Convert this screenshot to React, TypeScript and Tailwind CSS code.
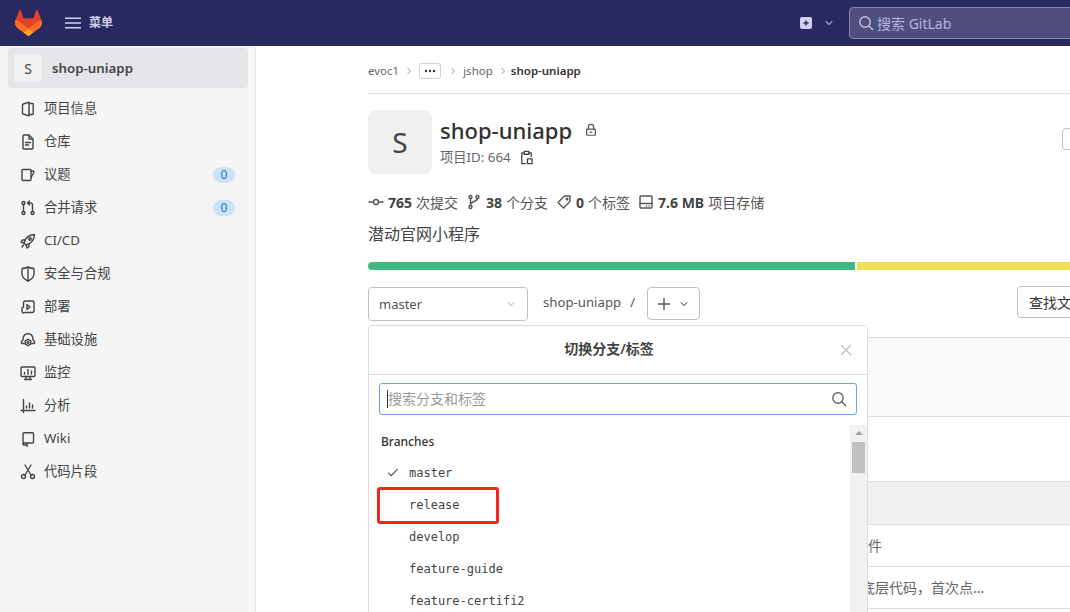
import React from "react";

const FONT = { fontFamily: '"Noto Sans","Noto Sans CJK SC",sans-serif' };

const S = ({ children, size = 16, cls = "" }: { children: React.ReactNode; size?: number; cls?: string }) => (
  <svg width={size} height={size} viewBox="0 0 16 16" fill="none" stroke="currentColor" strokeWidth={1.4} strokeLinecap="round" strokeLinejoin="round" className={`shrink-0 ${cls}`}>
    {children}
  </svg>
);

const Tanuki = () => (
  <svg width="27" height="26" viewBox="0 0 25 24" className="shrink-0">
    <path d="m24.507 9.5-.034-.09L21.082.562a.896.896 0 0 0-1.694.091l-2.29 7.01H7.825L5.535.653a.898.898 0 0 0-1.694-.09L.451 9.411.416 9.5a6.297 6.297 0 0 0 2.09 7.278l.012.01.03.022 5.16 3.867 2.56 1.935 1.554 1.176a1.051 1.051 0 0 0 1.268 0l1.555-1.176 2.56-1.935 5.197-3.89.014-.01A6.297 6.297 0 0 0 24.507 9.5Z" fill="#E24329" />
    <path d="m24.507 9.5-.034-.09a11.44 11.44 0 0 0-4.56 2.051l-7.447 5.632 4.742 3.584 5.197-3.89.014-.01A6.297 6.297 0 0 0 24.507 9.5Z" fill="#FC6D26" />
    <path d="m7.707 20.677 2.56 1.935 1.555 1.176a1.051 1.051 0 0 0 1.268 0l1.555-1.176 2.56-1.935-4.743-3.584-4.755 3.584Z" fill="#FCA326" />
    <path d="M5.01 11.461a11.43 11.43 0 0 0-4.56-2.05L.416 9.5a6.297 6.297 0 0 0 2.09 7.278l.012.01.03.022 5.16 3.867 4.745-3.584-7.444-5.632Z" fill="#FC6D26" />
  </svg>
);

const icons: Record<string, React.ReactNode> = {
  info: <><path d="M9 1.200 3.200 3c-.5.200-.7.500-.7 1v8c0 .5.200.8.700 1L9 14.800Z" /><path d="M9 2.500h3.500c.4 0 .7.300.7.700v9.600c0 .4-.3.700-.7.700H9" /></>,
  repo: <><path d="M3 2c0-.6.400-1 1-1h5l4 4v9c0 .6-.4 1-1 1H4c-.6 0-1-.4-1-1Z" /><path d="M9 1.500V5h3.500" /><path d="M5.500 8.500h5M5.500 11h3" /></>,
  issue: <><path d="M2 3.500c0-.6.400-1 1-1h7c.6 0 1 .4 1 1v9c0 .6-.4 1-1 1H3c-.6 0-1-.4-1-1Z" /><path d="M11 4h2c.8 0 1.200.8.800 1.500L11 10.500" /></>,
  merge: <><circle cx="3.500" cy="3" r="1.500" /><circle cx="3.500" cy="13" r="1.500" /><circle cx="12.500" cy="13" r="1.500" /><path d="M3.500 4.500v7M12.500 11.500V5c0-1-.5-2-2-2H8" /><path d="M9.500 1 7.500 3l2 2" /></>,
  rocket: <><path d="M5.500 11.500 4 10c1-4 4-8 10.500-8.500C14 8 10 11 6 12Z" /><circle cx="10" cy="6" r="1.200" /><path d="M5 7H2.500L1 9l3 1M9 11v2.500l-2 1.500-1-3M3.500 12 2 14" /></>,
  shield: <><path d="M8 1c2 1 4 1.500 6 1.500v5c0 3.500-2.500 6-6 7.500-3.500-1.500-6-4-6-7.500v-5c2 0 4-.5 6-1.500Z" /><path d="M8 1.500V15" /></>,
  deploy: <><path d="M3.500 8.500V4C3.500 2.800 4.300 2 5.500 2H12c1.200 0 2 .8 2 2v7.500c0 1.200-.8 2-2 2H5" /><path d="M2 8.500V12c0 1.200.8 2 2 2" /><path d="m7 5.500 3 2.500-3 2.500Z" /></>,
  infra: <><path d="M4 11.500H2.500c-1 0-1.500-1-1-1.800L3 7.500C3.200 4 5 1.800 8 1.800s4.800 2.200 5 5.700l1.500 2.200c.5.800 0 1.800-1 1.800H12" /><circle cx="8" cy="10.500" r=".9" /><path d="m8 7.300 2.800 1.600v3.200L8 13.700l-2.800-1.600V8.900Z" /></>,
  monitor: <><rect x="1" y="2" width="14" height="9.500" rx="1" /><path d="M4.500 14.500h7M4.500 9V7.500M8 9V4.500M11.500 9V6M6 11.500v3M10 11.500v3" /></>,
  chart: <><path d="M3.500 1.500v13M1 12.500h14M6.500 10V8M9.500 10V5M12.500 10V7" /></>,
  wiki: <><path d="M3 12V2.800c0-.6.400-1 1-1h8.500c.6 0 1 .4 1 1V11c0 .6-.4 1-1 1H4c-.6 0-1 .5-1 1.200S3.400 14 4 14h3" /><path d="M7 12v3.500" /></>,
  snippet: <><circle cx="3.500" cy="12.500" r="2" /><circle cx="12.500" cy="12.500" r="2" /><path d="M5 11 11 1M11 11 5 1" /></>,
};

const navItems: [string, string, string?][] = [
  ["info", "项目信息"],
  ["repo", "仓库"],
  ["issue", "议题", "0"],
  ["merge", "合并请求", "0"],
  ["rocket", "CI/CD"],
  ["shield", "安全与合规"],
  ["deploy", "部署"],
  ["infra", "基础设施"],
  ["monitor", "监控"],
  ["chart", "分析"],
  ["wiki", "Wiki"],
  ["snippet", "代码片段"],
];

const Chevron = ({ cls = "", size = 12 }: { cls?: string; size?: number }) => (
  <S size={size} cls={cls}><path d="m4 6 4 4 4-4" /></S>
);

const Crumb = () => (
  <svg width="6" height="8" viewBox="0 0 6 8" fill="none" stroke="#9a9a9a" strokeWidth="1" className="shrink-0"><path d="m1.500 1 3 3-3 3" /></svg>
);

const Stat = ({ icon, n, t }: { icon: React.ReactNode; n: string; t: string }) => (
  <div className="flex items-center">
    {icon}
    <span className="ml-[4px] text-[14px] font-bold text-[#444]">{n}</span>
    <span className="ml-[4px] text-[14px] text-[#555]">{t}</span>
  </div>
);

const branches = ["master", "release", "develop", "feature-guide", "feature-certifi2"];

export default function App() {
  return (
    <div style={FONT} className="relative flex h-[612px] w-[1070px] flex-col overflow-hidden bg-white text-[#303030]">
      <header className="flex h-[46px] shrink-0 items-center overflow-hidden bg-[#292961] pl-[15px]">
        <Tanuki />
        <svg width="16" height="12" viewBox="0 0 16 12" className="ml-[23px] text-[#d1d0ef]" fill="none" stroke="currentColor" strokeWidth="1.500"><path d="M0 1.200h16M0 6h16M0 10.800h16" /></svg>
        <span className="ml-[8px] text-[12px] font-semibold text-[#d1d0ef]">菜单</span>
        <div className="ml-auto flex items-center">
          <svg width="13" height="12" viewBox="0 0 13 12"><rect width="12" height="12" rx="2" fill="#d1d0ef" /><path d="M6 3.500v5M3.500 6h5" stroke="#292961" strokeWidth="1.500" /></svg>
          <Chevron cls="ml-[10px] text-[#d1d0ef]" />
          <div className="ml-[14px] -mr-[10px] flex h-[32px] w-[231px] items-center rounded-[4px] border border-[#8584b5] bg-[#4f4e7d] pl-[8px] text-[#b5b4da]">
            <S size={16} cls="text-[#c6c5e6]"><circle cx="7" cy="7" r="5.200" /><path d="m11 11 3.500 3.500" /></S>
            <span className="ml-[3px] text-[14px]">搜索 GitLab</span>
          </div>
        </div>
      </header>

      <div className="flex min-h-0 flex-1">
        <aside className="flex w-[256px] shrink-0 flex-col border-r border-[#e6e6e6] bg-[#f5f5f5] pt-[2px]">
          <div className="ml-[8px] mr-[7px] flex h-[40px] items-center rounded-[4px] bg-[#e5e5ea] pl-[5px]">
            <div className="flex h-[30px] w-[30px] items-center justify-center rounded-[4px] border border-[#e6e6e6] bg-[#f2f2f2] text-[14px] text-[#444]">S</div>
            <span className="ml-[9px] pt-[1px] text-[13.300px] font-semibold text-[#444]">shop-uniapp</span>
          </div>
          <nav className="mt-[4px] flex flex-col">
            {navItems.map(([ic, label, badge]) => (
              <div key={label} className="flex h-[33px] items-center pl-[20px] pr-[20px]">
                <S cls="text-[#444]">{icons[ic]}</S>
                <span className="ml-[8px] text-[13.300px] text-[#444]">{label}</span>
                {badge && (
                  <span className="ml-auto flex h-[16px] w-[22px] items-center justify-center rounded-full bg-[#cbe2f9] text-[12px] text-[#1f75cb]">{badge}</span>
                )}
              </div>
            ))}
          </nav>
        </aside>

        <main className="min-w-[1000px] flex-1 pl-[112px]">
          <div className="flex h-[48px] w-[900px] items-center gap-[7px] border-b border-[#dcdcde] pt-[2px] text-[11.500px] text-[#666]">
            <span>evoc1</span>
            <Crumb />
            <span className="flex h-[16px] w-[22px] items-center justify-center rounded-[3px] border border-[#d0d0d0] text-[#333]">
              <svg width="12" height="4" viewBox="0 0 12 4" fill="currentColor"><circle cx="2" cy="2" r="1.200" /><circle cx="6" cy="2" r="1.200" /><circle cx="10" cy="2" r="1.200" /></svg>
            </span>
            <span className="ml-[2px]"><Crumb /></span>
            <span>jshop</span>
            <Crumb />
            <span className="-ml-[2px] font-semibold text-[#333]">shop-uniapp</span>
          </div>

          <div className="mt-[16px] flex h-[64px] w-[900px]">
            <div className="flex h-[64px] w-[64px] items-center justify-center rounded-[8px] bg-[#f0f0f0] text-[28px] text-[#444]">S</div>
            <div className="ml-[8px] flex flex-col">
              <div className="flex h-[40px] items-center">
                <span className="text-[22px] font-medium text-[#303030]">shop-uniapp</span>
                <S size={14} cls="ml-[12px] text-[#555]"><rect x="3" y="7" width="10" height="7" rx="1" /><path d="M5 7V4.500a3 3 0 0 1 6 0V7" /><path d="M7 10.500h2" /></S>
              </div>
              <div className="-mt-[2px] flex items-center text-[13.300px] text-[#666]">
                <span>项目ID: 664</span>
                <S size={15} cls="ml-[8px] text-[#444]"><path d="M5 3H3v11.500h4" /><path d="M11 3h2v4" /><rect x="5.500" y="1.500" width="5" height="3" /><rect x="9" y="9.500" width="5" height="5" /></S>
              </div>
            </div>
            <div className="ml-auto mr-[176px] mt-[18px] h-[22px] w-[30px] rounded-[4px] border border-[#bfbfbf]" />
          </div>

          <div className="mt-[16px] flex h-[24px] items-center gap-[8px]">
            <Stat n="765" t="次提交" icon={<S size={16} cls="text-[#555]"><circle cx="8" cy="8" r="2.500" /><path d="M1 8h4.500M10.500 8H15" /></S>} />
            <Stat n="38" t="个分支" icon={<S size={16} cls="text-[#555]"><circle cx="4.500" cy="3" r="1.500" /><circle cx="11.500" cy="3" r="1.500" /><circle cx="4.500" cy="13" r="1.500" /><path d="M4.500 4.500v7M11.500 4.500c0 3-7 3-7 6" /></S>} />
            <Stat n="0" t="个标签" icon={<S size={16} cls="text-[#555]"><path d="M8.500 2H14v5.500L7.500 14 2 8.500Z" /><circle cx="11" cy="5" r=".8" /></S>} />
            <Stat n="7.6 MB" t="项目存储" icon={<S size={16} cls="text-[#555]"><rect x="2" y="2" width="12" height="12" rx="1" /><path d="M2 9.500h12M8.500 12h.01M11 12h.01" /></S>} />
          </div>

          <p className="mt-[8px] h-[24px] text-[16px] leading-[24px] text-[#444]">潜动官网小程序</p>

          <div className="mt-[16px] flex h-[8px] w-[900px] gap-[2px] overflow-hidden rounded-l-full">
            <div className="w-[487px] bg-[#41b883]" />
            <div className="flex-1 bg-[#f0df53]" />
          </div>

          <div className="mt-[17px] flex h-[34px] w-[900px] items-start">
            <div className="flex h-[34px] w-[160px] items-center rounded-[4px] border border-[#bfbfbf] pl-[10px] pr-[10px] text-[13px] text-[#555]">
              <span className="pt-[1px]">master</span>
              <Chevron cls="ml-auto text-[#bbb]" />
            </div>
            <span className="ml-[15px] flex h-[32px] items-center text-[13.200px] text-[#555]">shop-uniapp</span>
            <span className="ml-[9px] flex h-[32px] items-center text-[13px] text-[#555]">/</span>
            <div className="ml-[12px] flex h-[33px] w-[53px] items-center justify-center gap-[6px] rounded-[4px] border border-[#bfbfbf] text-[#555]">
              <S size={16}><path d="M8 2.500v11M2.500 8h11" /></S>
              <Chevron />
            </div>
            <div className="ml-[317px] -mt-[1px] flex h-[32px] w-[120px] shrink-0 items-center rounded-[4px] border border-[#bfbfbf] pl-[11px] pt-[1px] text-[14px] text-[#333]">查找文件</div>
          </div>

          <div className="mt-[16px] h-[80px] w-[900px] border-y border-[#dcdcde] bg-[#fafafa]" />
          <div className="h-[64px] w-[900px]" />
          <div className="h-[44px] w-[900px] border-y border-[#dcdcde] bg-[#f0f0f0]" />
          <div className="flex h-[42px] w-[900px] items-center border-b border-[#dcdcde] pl-[486px] text-[14px] text-[#666]">文件</div>
          <div className="flex h-[42px] w-[900px] items-center border-b border-[#dcdcde] pl-[493px] text-[14px] text-[#666]">底层代码，首次点...</div>
        </main>
      </div>

      <div className="absolute left-[368px] top-[325px] flex h-[300px] w-[500px] flex-col rounded-[4px] border border-[#dcdcde] bg-white">
        <div className="flex h-[49px] shrink-0 items-center justify-center border-b border-[#dcdcde] pb-[3px] pr-[18px] text-[14px] font-semibold text-[#444]">
          切换分支/标签
          <svg width="12" height="12" viewBox="0 0 12 12" fill="none" stroke="#c4c4c4" strokeWidth="1.500" className="absolute right-[15px] top-[18px]"><path d="m1 1 10 10M11 1 1 11" /></svg>
        </div>
        <div className="mx-[10px] mt-[8px] flex h-[32px] shrink-0 items-center rounded-[3px] border border-[#63a6e9] pl-[7px] pr-[9px] text-[14px] text-[#999]">
          <span className="h-[18px] w-[1px] bg-[#333]" />
          <span className="-mt-[1px]">搜索分支和标签</span>
          <S size={16} cls="ml-auto text-[#666]"><circle cx="7" cy="7" r="5.200" /><path d="m11 11 3.500 3.500" /></S>
        </div>
        <div className="relative mt-[10px] flex-1 pl-[12px] pt-[1px]">
          <div className="flex h-[31px] items-center text-[12px] font-medium text-[#333]">Branches</div>
          <div className="flex flex-col">
            {branches.map((b, i) => (
              <div key={b} className="flex h-[32px] items-center font-['DejaVu_Sans_Mono',monospace] text-[12px] text-[#444]">
                <span className="w-[28px] pl-[6px]">
                  {i === 0 && <S size={12} cls="text-[#333]"><path d="m2 8 3.500 3.500L14 3" /></S>}
                </span>
                {b}
              </div>
            ))}
          </div>
          <div className="absolute right-0 top-0 flex h-[200px] w-[17px] flex-col items-center bg-[#f1f1f1] pt-[6px]">
            <span className="h-0 w-0 border-x-[4px] border-b-[4px] border-x-transparent border-b-[#a3a3a3]" />
            <span className="mt-[7px] h-[31px] w-[13px] bg-[#c1c1c1]" />
          </div>
        </div>
      </div>
      <div className="absolute left-[377px] top-[487px] h-[37px] w-[122px] rounded-[3px] border-[3px] border-[#f3261c]" />
    </div>
  );
}
